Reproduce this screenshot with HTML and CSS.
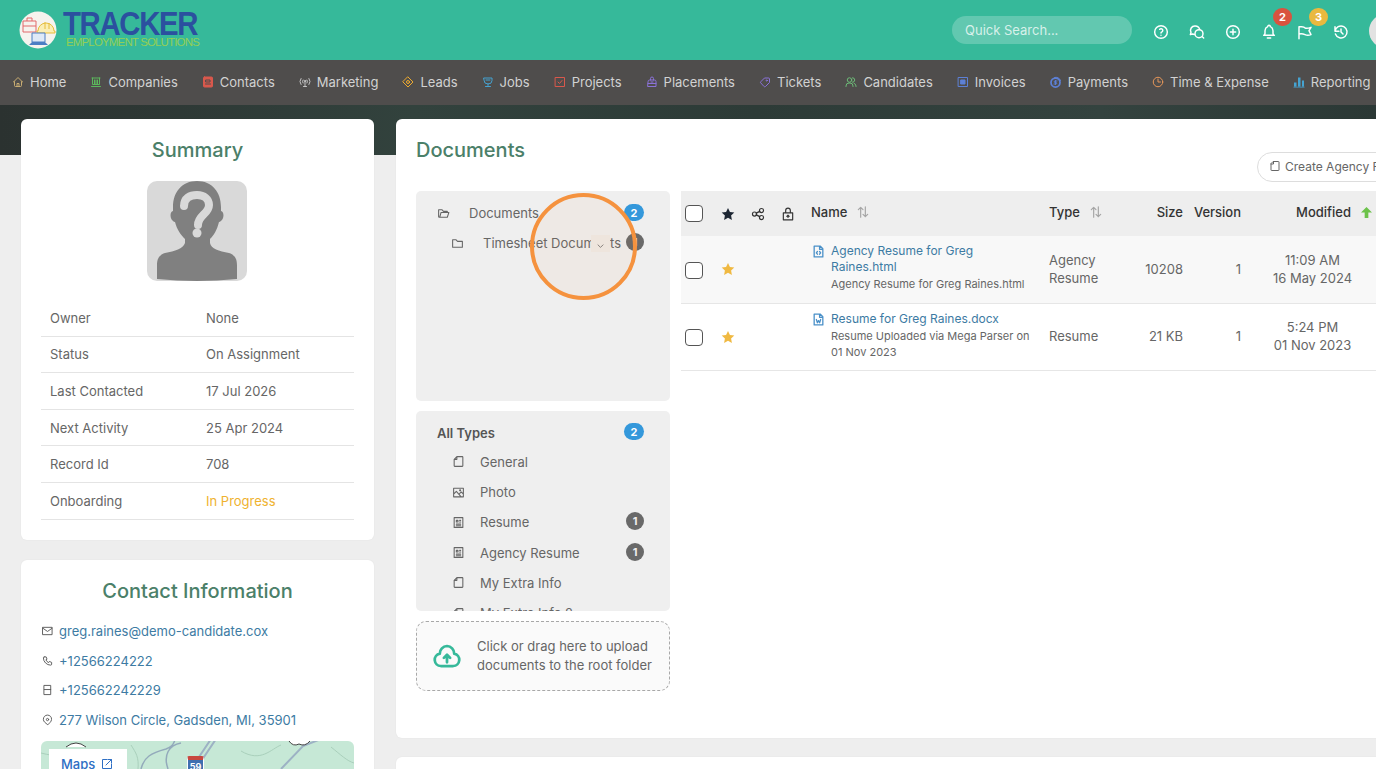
FILE: index.html
```html
<!DOCTYPE html>
<html lang="en">

<head>
    <meta charset="UTF-8">
    <meta name="viewport" content="width=device-width, initial-scale=1.0">
    <title>Candidate Documents</title>
    <link rel="stylesheet" href="styles.css">
</head>

<body>
    <svg class="sprite" aria-hidden="true">
        <symbol id="i-home" viewBox="0 0 24 24"><path d="M5 12H3l9-9 9 9h-2M5 12v7a2 2 0 0 0 2 2h10a2 2 0 0 0 2-2v-7M10 21v-6h4v6"/></symbol>
        <symbol id="i-bank" viewBox="0 0 24 24"><path d="M3 21h18M4 4h16M5 4v13h14V4M9 8v9M12 8v9M15 8v9"/></symbol>
        <symbol id="i-contact" viewBox="0 0 24 24"><path fill="currentColor" d="M5 2h14a2 2 0 0 1 2 2v16a2 2 0 0 1-2 2H5a2 2 0 0 1-2-2V4a2 2 0 0 1 2-2z"/><path stroke="#4f4d4c" d="M8 8h8v4H8zM7 16h10"/></symbol>
        <symbol id="i-antenna" viewBox="0 0 24 24"><path d="M12 11v10M9 21h6M8 8a5 5 0 0 0 0 6M16 8a5 5 0 0 1 0 6M4 5a10 10 0 0 0 0 12M20 5a10 10 0 0 1 0 12"/><circle cx="12" cy="10" r="1.5"/></symbol>
        <symbol id="i-target" viewBox="0 0 24 24"><path d="M12 2l10 10-10 10L2 12z"/><circle cx="12" cy="12" r="3"/></symbol>
        <symbol id="i-trophy" viewBox="0 0 24 24"><path d="M4 4h16v5a8 7 0 0 1-16 0zM12 16v3M7 21h10M8 8h8"/></symbol>
        <symbol id="i-check" viewBox="0 0 24 24"><path d="M3 3h18v18H3zM8 12l3 3 5-6"/></symbol>
        <symbol id="i-bag" viewBox="0 0 24 24"><path d="M4 11a3 3 0 0 1 3-3h10a3 3 0 0 1 3 3v10H4zM9 8V5a3 3 0 0 1 6 0v3M4 15h16M10 12h4"/></symbol>
        <symbol id="i-tag" viewBox="0 0 24 24"><path d="M3 12l8-8h8a2 2 0 0 1 2 2v7l-8 8a2 2 0 0 1-3 0z"/><circle cx="15.500" cy="9" r="1.200"/></symbol>
        <symbol id="i-users" viewBox="0 0 24 24"><circle cx="9" cy="8" r="4.500"/><path d="M2 21v-1a6 6 0 0 1 6-6h2a6 6 0 0 1 6 6v1M15 3.500a4.500 4.500 0 0 1 0 9M22 21v-1a6 6 0 0 0-4-5.500"/></symbol>
        <symbol id="i-invoice" viewBox="0 0 24 24"><path d="M3 3h18v18H3z"/><path fill="currentColor" d="M8 8h8v8H8z"/></symbol>
        <symbol id="i-coins" viewBox="0 0 24 24"><circle cx="11" cy="13" r="9" stroke-width="3.500"/><path d="M9 3a9 9 0 0 1 12 6M11 9v8M14 10h-4a1.500 1.500 0 0 0 0 3h2a1.500 1.500 0 0 1 0 3H8"/></symbol>
        <symbol id="i-clock" viewBox="0 0 24 24"><circle cx="12" cy="12" r="9.500"/><path d="M12 6v6h5"/></symbol>
        <symbol id="i-chart" viewBox="0 0 24 24"><path fill="currentColor" stroke="none" d="M2 13h5v8H2zM10 3h5v18h-5zM18 9h4v12h-4zM1 21.500h22V23H1z"/></symbol>
        <symbol id="i-help" viewBox="0 0 24 24"><circle cx="12" cy="12" r="9.500"/><path d="M12 17v.01M12 13.500a1.500 1.500 0 0 1 1-1.500 2.600 2.600 0 1 0-3-4"/></symbol>
        <symbol id="i-chat" viewBox="0 0 24 24"><path d="M9 3a7 7 0 0 1 7 5M9 3a6.500 6.500 0 0 0-6 9.500L2 16l3.500-1a7 7 0 0 0 2.500.700"/><circle cx="15" cy="14.500" r="6"/><path d="M20 19l2 2"/></symbol>
        <symbol id="i-plus" viewBox="0 0 24 24"><circle cx="12" cy="12" r="9.500"/><path d="M8 12h8M12 8v8"/></symbol>
        <symbol id="i-bell" viewBox="0 0 24 24"><path d="M10 4a2 2 0 1 1 4 0 7 7 0 0 1 4 6v3a4 4 0 0 0 2 4H4a4 4 0 0 0 2-4v-3a7 7 0 0 1 4-6M9.500 21h5"/></symbol>
        <symbol id="i-flag" viewBox="0 0 24 24"><path d="M3 22V4h4q4 0 5 2 3 1 9-1l-3 5 3 6q-5 2-9 0-4-2-9-1"/></symbol>
        <symbol id="i-history" viewBox="0 0 24 24"><path d="M12 7.500V12l3 3M3.100 11a9 9 0 1 1 .5 4M3 4v7h6"/></symbol>
        <symbol id="i-open" viewBox="0 0 24 24"><path d="M5 19l2.500-9H22l-3 9H4a1 1 0 0 1-1-1V5h6l3 3h7v2"/></symbol>
        <symbol id="i-folder" viewBox="0 0 24 24"><path d="M3 5h6l3 3h9v11H3z"/></symbol>
        <symbol id="i-note" viewBox="0 0 24 24"><path d="M9 3h10a1 1 0 0 1 1 1v16a1 1 0 0 1-1 1H5a1 1 0 0 1-1-1V8zM9 3v5H4"/></symbol>
        <symbol id="i-photo" viewBox="0 0 24 24"><path d="M3 4h18v16H3zM3 15l5-5 9 10M14 14l3-3 4 4"/><circle cx="15" cy="8" r="1"/></symbol>
        <symbol id="i-doc" viewBox="0 0 24 24"><path d="M4 3h16v18H4zM8 8h3v3H8zM14 8h2M14 11h2M8 15h8M8 18h8"/></symbol>
        <symbol id="i-cloud" viewBox="0 0 24 24"><path d="M7 20a5 5 0 0 1-.8-9.900A6.200 6.200 0 0 1 12 4a6.200 6.200 0 0 1 5.800 6.100A5 5 0 0 1 17 20z"/><path d="M12 17v-6M9.500 13.500L12 11l2.500 2.500"/></symbol>
        <symbol id="i-star" viewBox="0 0 24 24"><path fill="currentColor" stroke="none" d="M12 1.500l3.300 6.900 7.500 1-5.500 5.200 1.400 7.500L12 18.500l-6.700 3.600 1.400-7.500L1.200 9.400l7.500-1z"/></symbol>
        <symbol id="i-share" viewBox="0 0 24 24"><circle cx="6" cy="12" r="3.500"/><circle cx="18" cy="6" r="3.500"/><circle cx="18" cy="18" r="3.500"/><path d="M9 10.500l6-3M9 13.500l6 3"/></symbol>
        <symbol id="i-lock" viewBox="0 0 24 24"><path d="M4 10h16v12H4zM8 10V6a4 4 0 0 1 8 0v4M12 18v-4M10 16l2-2 2 2"/></symbol>
        <symbol id="i-sort" viewBox="0 0 24 24"><path d="M8 21V4M4 8l4-4 4 4M16 3v17M12 16l4 4 4-4"/></symbol>
        <symbol id="i-code" viewBox="0 0 24 24"><path d="M4 2h11l5 5v15H4zM14 2v6h6M10 12l-2 2.500 2 2.500M14 12l2 2.500-2 2.500"/></symbol>
        <symbol id="i-word" viewBox="0 0 24 24"><path d="M4 2h11l5 5v15H4zM14 2v6h6M8 12l2 6 2-4 2 4 2-6"/></symbol>
        <symbol id="i-mail" viewBox="0 0 24 24"><path d="M2 4h20v16H2zM2 6l10 7 10-7"/></symbol>
        <symbol id="i-phone" viewBox="0 0 24 24"><path d="M5 3h4l2 5-2.500 1.500a11 11 0 0 0 6 6L16 13l5 2v4a2 2 0 0 1-2 2A16 16 0 0 1 3 5a2 2 0 0 1 2-2"/></symbol>
        <symbol id="i-fax" viewBox="0 0 24 24"><path d="M5 2h14v20H5zM5 11h14"/></symbol>
        <symbol id="i-pin" viewBox="0 0 24 24"><circle cx="12" cy="11" r="2.500"/><path d="M12 22l-6-5a9 9 0 1 1 12 0z"/></symbol>
        <symbol id="i-external" viewBox="0 0 24 24"><path d="M12 3H3v18h18v-9M10 14L21 3M14 3h7v7"/></symbol>
    </svg>

    <header class="topbar">
        <div class="logo">
            <svg class="logo-mark" viewBox="0 0 38 38">
                <circle cx="19" cy="19" r="18.500" fill="#f6f3ee"/>
                <path d="M4 10h13v11H4zM8 10V7h5v3M4 15h13" fill="none" stroke="#e2686a" stroke-width="1"/>
                <path d="M19 20a8 8 0 0 1 16 0h1v2H18v-2zM26 11v7M30 12v6" fill="#fbeeb5" stroke="#e6bd3c" stroke-width="1"/>
                <path d="M13 22h13v9H13z" fill="#dfe9f7" stroke="#4c7ec4" stroke-width="1"/>
                <path d="M10 34h19l-3-3H13z" fill="#4c7ec4"/>
            </svg>
            <div class="logo-text">
                <div class="logo-name">TRACKER</div>
                <div class="logo-sub">EMPLOYMENT SOLUTIONS</div>
            </div>
        </div>
        <input class="quick-search" type="text" placeholder="Quick Search...">
        <div class="top-icons">
            <svg class="ic"><use href="#i-help"/></svg>
            <svg class="ic"><use href="#i-chat"/></svg>
            <svg class="ic"><use href="#i-plus"/></svg>
            <span class="top-item"><svg class="ic"><use href="#i-bell"/></svg><b class="top-badge red">2</b></span>
            <span class="top-item"><svg class="ic"><use href="#i-flag"/></svg><b class="top-badge yellow">3</b></span>
            <svg class="ic"><use href="#i-history"/></svg>
        </div>
        <div class="top-avatar"></div>
    </header>

    <nav class="mainnav">
        <a class="nav-item"><svg class="ic c-tan"><use href="#i-home"/></svg>Home</a>
        <a class="nav-item"><svg class="ic c-green"><use href="#i-bank"/></svg>Companies</a>
        <a class="nav-item"><svg class="ic c-red"><use href="#i-contact"/></svg>Contacts</a>
        <a class="nav-item"><svg class="ic c-grey"><use href="#i-antenna"/></svg>Marketing</a>
        <a class="nav-item"><svg class="ic c-amber"><use href="#i-target"/></svg>Leads</a>
        <a class="nav-item"><svg class="ic c-sky"><use href="#i-trophy"/></svg>Jobs</a>
        <a class="nav-item"><svg class="ic c-red"><use href="#i-check"/></svg>Projects</a>
        <a class="nav-item"><svg class="ic c-purple"><use href="#i-bag"/></svg>Placements</a>
        <a class="nav-item"><svg class="ic c-purple"><use href="#i-tag"/></svg>Tickets</a>
        <a class="nav-item"><svg class="ic c-mint"><use href="#i-users"/></svg>Candidates</a>
        <a class="nav-item"><svg class="ic c-blue"><use href="#i-invoice"/></svg>Invoices</a>
        <a class="nav-item"><svg class="ic c-blue"><use href="#i-coins"/></svg>Payments</a>
        <a class="nav-item"><svg class="ic c-orange"><use href="#i-clock"/></svg>Time &amp; Expense</a>
        <a class="nav-item"><svg class="ic c-sky"><use href="#i-chart"/></svg>Reporting</a>
    </nav>

    <main class="content">
        <div class="left-col">
            <section class="card summary">
                <h2 class="card-title center">Summary</h2>
                <svg class="avatar" viewBox="0 0 100 100">
                    <path fill="#808080" d="M50 0C35 0 26 11 26 26v4c-4 1-3 10 2 11 2 8 6 13 10 17v4c-2 6-10 8-20 10-6 2-8 6-8 12v14q40 4 80 0V84c0-6-2-10-8-12-10-2-18-4-19-10v-4c4-4 7-9 9-17 5-1 6-10 2-11v-4C74 11 65 0 50 0z"/>
                    <path fill="none" stroke="#d9d9d9" stroke-width="8" stroke-linecap="round" stroke-linejoin="round" d="M37 25c0-8 6-11 13-11s12 4 12 10c0 9-11 10-11 20"/>
                    <circle cx="50" cy="52" r="4.500" fill="#d9d9d9"/>
                </svg>
                <dl class="facts">
                    <div class="fact"><dt>Owner</dt><dd>None</dd></div>
                    <div class="fact"><dt>Status</dt><dd>On Assignment</dd></div>
                    <div class="fact"><dt>Last Contacted</dt><dd>17 Jul 2026</dd></div>
                    <div class="fact"><dt>Next Activity</dt><dd>25 Apr 2024</dd></div>
                    <div class="fact"><dt>Record Id</dt><dd>708</dd></div>
                    <div class="fact"><dt>Onboarding</dt><dd class="progress">In Progress</dd></div>
                </dl>
            </section>

            <section class="card contact">
                <h2 class="card-title center">Contact Information</h2>
                <ul class="contact-list">
                    <li><svg class="ic"><use href="#i-mail"/></svg><a>greg.raines@demo-candidate.cox</a></li>
                    <li><svg class="ic"><use href="#i-phone"/></svg><a>+12566224222</a></li>
                    <li><svg class="ic"><use href="#i-fax"/></svg><a>+125662242229</a></li>
                    <li><svg class="ic"><use href="#i-pin"/></svg><a>277 Wilson Circle, Gadsden, MI, 35901</a></li>
                </ul>
                <div class="map">
                    <svg class="map-roads" viewBox="0 0 313 120">
                        <path d="M100 28C103 16 110 12 125 8 135 4 132 0 135 -2M127 28C122 14 128 4 140 2" fill="none" stroke="#93aabb" stroke-width="1.500"/>
                        <path d="M150 28L170 -2M155 28L175 -2M240 28L262 5 280 -2" fill="none" stroke="#9db2c4" stroke-width="2"/>
                        <path d="M0 12C30 20 40 8 60 14M90 4C95 12 98 16 97 28M200 10C220 22 230 8 240 4M290 6C300 14 306 20 313 22" fill="none" stroke="#a9cfbb" stroke-width="1"/>
                        <path d="M248 0q4 6 10 3q6 3 11 -3" fill="#fff" stroke="#444" stroke-width="1"/>
                        <path d="M25 6q10 -8 20 0" fill="#fff" stroke="#444" stroke-width="1"/>
                    </svg>
                    <span class="shield">59</span>
                    <a class="maps-link">Maps <svg class="ic"><use href="#i-external"/></svg></a>
                </div>
            </section>
        </div>

        <div class="right-col">
            <section class="card documents">
                <div class="doc-head">
                    <h2 class="card-title">Documents</h2>
                    <button class="create-btn"><svg class="ic"><use href="#i-note"/></svg>Create Agency Resume</button>
                </div>
                <div class="doc-body">
                    <div class="doc-side">
                        <div class="panel folders">
                            <div class="side-row top"><svg class="ic"><use href="#i-open"/></svg><span class="row-label wide">Documents</span><b class="count blue">2</b></div>
                            <div class="side-row sub"><svg class="ic"><use href="#i-folder"/></svg><span class="row-label wide">Timesheet Documents</span><b class="count">1</b><svg class="row-chevron" viewBox="0 0 10 6"><path d="M1 1l4 4 4-4"/></svg></div>
                        </div>
                        <div class="panel types">
                            <div class="side-row top strong"><span class="row-label">All Types</span><b class="count blue">2</b></div>
                            <div class="side-row type"><svg class="ic"><use href="#i-note"/></svg><span class="row-label">General</span></div>
                            <div class="side-row type"><svg class="ic"><use href="#i-photo"/></svg><span class="row-label">Photo</span></div>
                            <div class="side-row type"><svg class="ic"><use href="#i-doc"/></svg><span class="row-label">Resume</span><b class="count">1</b></div>
                            <div class="side-row type"><svg class="ic"><use href="#i-doc"/></svg><span class="row-label">Agency Resume</span><b class="count">1</b></div>
                            <div class="side-row type"><svg class="ic"><use href="#i-note"/></svg><span class="row-label">My Extra Info</span></div>
                            <div class="side-row type"><svg class="ic"><use href="#i-note"/></svg><span class="row-label">My Extra Info 2</span></div>
                        </div>
                        <div class="upload">
                            <svg class="ic upload-icon"><use href="#i-cloud"/></svg>
                            <span>Click or drag here to upload documents to the root folder</span>
                        </div>
                    </div>

                    <table class="doc-table">
                        <colgroup>
                            <col class="w-check">
                            <col class="w-icon">
                            <col class="w-icon">
                            <col class="w-icon">
                            <col class="w-name">
                            <col class="w-type">
                            <col class="w-size">
                            <col class="w-version">
                            <col class="w-modified">
                            <col>
                        </colgroup>
                        <thead>
                            <tr>
                                <th class="pad-check"><input type="checkbox"></th>
                                <th class="t-icon"><svg class="ic c-ink"><use href="#i-star"/></svg></th>
                                <th class="t-icon"><svg class="ic"><use href="#i-share"/></svg></th>
                                <th class="t-icon"><svg class="ic"><use href="#i-lock"/></svg></th>
                                <th>Name<svg class="ic sort"><use href="#i-sort"/></svg></th>
                                <th>Type<svg class="ic sort"><use href="#i-sort"/></svg></th>
                                <th class="right">Size</th>
                                <th class="right">Version</th>
                                <th class="right modified-head">Modified<svg class="ic sort-on" viewBox="0 0 12 12"><path d="M6 0L12 6H8v6H4V6H0z"/></svg></th>
                                <th></th>
                            </tr>
                        </thead>
                        <tbody>
                            <tr class="row-a">
                                <td class="pad-check"><input type="checkbox"></td>
                                <td class="t-icon"><svg class="ic c-gold"><use href="#i-star"/></svg></td>
                                <td></td>
                                <td></td>
                                <td class="name-cell">
                                    <svg class="ic file-ic"><use href="#i-code"/></svg>
                                    <div>
                                        <a class="file-link">Agency Resume for Greg Raines.html</a>
                                        <div class="file-note">Agency Resume for Greg Raines.html</div>
                                    </div>
                                </td>
                                <td>Agency Resume</td>
                                <td class="right">10208</td>
                                <td class="right">1</td>
                                <td class="center">11:09 AM<br>16 May 2024</td>
                                <td></td>
                            </tr>
                            <tr class="row-b">
                                <td class="pad-check"><input type="checkbox"></td>
                                <td class="t-icon"><svg class="ic c-gold"><use href="#i-star"/></svg></td>
                                <td></td>
                                <td></td>
                                <td class="name-cell">
                                    <svg class="ic file-ic"><use href="#i-word"/></svg>
                                    <div>
                                        <a class="file-link">Resume for Greg Raines.docx</a>
                                        <div class="file-note">Resume Uploaded via Mega Parser on 01 Nov 2023</div>
                                    </div>
                                </td>
                                <td>Resume</td>
                                <td class="right">21 KB</td>
                                <td class="right">1</td>
                                <td class="center">5:24 PM<br>01 Nov 2023</td>
                                <td></td>
                            </tr>
                        </tbody>
                    </table>
                </div>
            </section>
            <section class="card next-card"></section>
        </div>
    </main>

    <div class="click-ring"></div>
</body>

</html>
```

FILE: styles.css
```css
* {
    margin: 0;
    padding: 0;
    box-sizing: border-box;
}

html,
body {
    height: 100%;
    overflow: hidden;
}

body {
    font-family: Inter, "Liberation Sans", sans-serif;
    font-size: 13px;
    color: #666;
    background: #eee;
}

.sprite {
    display: none;
}

.ic {
    display: block;
    flex: none;
    width: 13px;
    height: 13px;
    fill: none;
    stroke: currentColor;
    stroke-width: 2;
    stroke-linecap: round;
    stroke-linejoin: round;
}

.c-tan { color: #c9ad72; }
.c-green { color: #5cb85c; }
.c-red { color: #d9584c; }
.c-grey { color: #c4c4c4; }
.c-amber { color: #efab2f; }
.c-sky { color: #45a3d1; }
.c-purple { color: #8b72d8; }
.c-mint { color: #6dbb78; }
.c-blue { color: #5d80d6; }
.c-orange { color: #e6975a; }
.c-ink { color: #1d2633; }
.c-gold { color: #f0b942; }

/* top bar */
.topbar {
    display: flex;
    align-items: center;
    height: 60px;
    padding-left: 19px;
    background: #36b99a;
    overflow: hidden;
}

.logo {
    display: flex;
    flex: 0 0 933px;
    align-items: center;
}

.logo-mark {
    display: block;
    width: 38px;
    height: 38px;
}

.logo-text {
    align-self: flex-start;
    margin-left: 6px;
    font-family: "Liberation Sans", sans-serif;
    font-weight: 700;
}

.logo-name {
    height: 26px;
    font-size: 33px;
    line-height: 26px;
    letter-spacing: -1.500px;
    color: #2b509f;
    transform: scaleX(.89);
    transform-origin: left center;
}

.logo-sub {
    margin-left: 3px;
    font-size: 11.500px;
    font-weight: 400;
    line-height: 10px;
    letter-spacing: -.85px;
    color: #93cf55;
}

.quick-search {
    flex: none;
    width: 180px;
    height: 28px;
    padding-left: 13px;
    border: 0;
    border-radius: 14px;
    font: 13px Inter, "Liberation Sans", sans-serif;
    color: #fff;
    background: rgba(255, 255, 255, .22);
}

.quick-search::placeholder {
    color: rgba(255, 255, 255, .75);
}

.top-icons {
    display: flex;
    flex: none;
    gap: 20px;
    margin: 4px 0 0 21px;
    color: #fff;
}

.top-icons .ic {
    width: 16px;
    height: 16px;
    stroke-width: 2.200;
}

.top-item {
    position: relative;
}

.top-badge {
    position: absolute;
    top: -16px;
    left: 12px;
    width: 19px;
    height: 18px;
    border-radius: 9px;
    font-size: 11px;
    font-weight: 700;
    line-height: 18px;
    text-align: center;
    color: #fff;
}

.top-badge.red {
    background: #d9533f;
}

.top-badge.yellow {
    background: #e9b93f;
}

.top-avatar {
    flex: none;
    width: 34px;
    height: 34px;
    margin: 2px 0 0 20px;
    border-radius: 50%;
    background: #e2e2e2;
}

/* main nav */
.mainnav {
    display: flex;
    gap: 24px;
    align-items: center;
    height: 45px;
    padding: 0 0 2px 12px;
    white-space: nowrap;
    color: #d2d2d2;
    background: #4f4d4c;
    overflow: hidden;
}

.nav-item {
    display: flex;
    flex: none;
    gap: 6px;
    align-items: center;
}

.nav-item .ic {
    width: 12px;
    height: 12px;
}

/* page */
.content {
    display: flex;
    gap: 22px;
    align-items: flex-start;
    padding: 14px 0 0 21px;
    background: linear-gradient(90deg, #2b3230, #32423d 30%, #2d3b37 55%, #34433f 80%, #2b3835) 0 0 / 100% 50px no-repeat;
}

.left-col {
    display: flex;
    flex: 0 0 353px;
    flex-direction: column;
    gap: 20px;
}

.right-col {
    display: flex;
    flex: 0 0 1049px;
    flex-direction: column;
    gap: 19px;
}

.card {
    padding: 19px 20px 20px;
    border-radius: 6px;
    background: #fff;
    box-shadow: 0 0 2px rgba(0, 0, 0, .06);
}

.card-title {
    font-size: 20px;
    font-weight: 500;
    line-height: 24px;
    color: #4b8069;
}

.center {
    text-align: center;
}

/* summary */
.avatar {
    display: block;
    width: 100px;
    height: 100px;
    margin: 19px 0 19px 106px;
    border-radius: 10px;
    background: #d9d9d9;
}

.fact {
    display: flex;
    align-items: center;
    height: 36.600px;
    padding-left: 9px;
    border-bottom: 1px solid #e4e4e4;
}

.fact dt {
    flex: 0 0 156px;
}

.progress {
    color: #efb22f;
}

/* contact */
.contact {
    height: 400px;
}

.contact-list {
    margin-top: 13.600px;
    list-style: none;
}

.contact-list li {
    display: flex;
    gap: 6px;
    align-items: center;
    height: 29.600px;
    padding-left: 1px;
}

.contact-list .ic {
    width: 11px;
    height: 12px;
    color: #555;
}

.contact-list a {
    color: #3d7ba3;
}

.map {
    position: relative;
    height: 120px;
    margin-top: 6.400px;
    border-radius: 6px;
    background: #c6e8d6;
    overflow: hidden;
}

.map-roads {
    display: block;
    width: 313px;
    height: 120px;
}

.shield {
    position: absolute;
    top: 15px;
    left: 146px;
    width: 17px;
    height: 18px;
    border: 1px solid #fff;
    border-top: 4px solid #c8473f;
    border-radius: 2px 2px 6px 6px;
    font-size: 9px;
    font-weight: 700;
    line-height: 13px;
    text-align: center;
    color: #fff;
    background: #3f6fb0;
}

.maps-link {
    position: absolute;
    top: 8px;
    left: 8px;
    display: flex;
    gap: 6px;
    align-items: flex-start;
    width: 78px;
    height: 36px;
    padding: 7px 0 0 12px;
    font-weight: 500;
    line-height: 16px;
    color: #2e6fc4;
    background: #fff;
}

.maps-link .ic {
    width: 12px;
    height: 12px;
    margin-top: 2px;
}

/* documents */
.documents {
    padding-bottom: 47px;
}

.doc-head {
    display: flex;
    justify-content: space-between;
    height: 53px;
}

.create-btn {
    display: flex;
    gap: 4px;
    align-items: center;
    width: 168px;
    height: 30px;
    margin-top: 14px;
    padding: 0 14px 2px 11px;
    border: 1px solid #ddd;
    border-radius: 15px;
    font: 12px Inter, "Liberation Sans", sans-serif;
    white-space: nowrap;
    color: #666;
    background: #fff;
}

.create-btn .ic {
    width: 12px;
    height: 12px;
}

.doc-body {
    display: flex;
    gap: 11px;
    align-items: flex-start;
}

.doc-side {
    display: flex;
    flex: 0 0 254px;
    flex-direction: column;
    gap: 10px;
}

.panel {
    padding-top: 7px;
    border-radius: 5px;
    background: #efefef;
    overflow: hidden;
}

.folders {
    height: 210px;
}

.types {
    height: 200px;
}

.side-row {
    display: flex;
    align-items: center;
    height: 30px;
    padding: 0 26px 0 21px;
}

.side-row .ic {
    width: 13px;
    height: 13px;
}

.row-label {
    flex: 1;
    margin-left: 15px;
    white-space: nowrap;
}

.row-label.wide {
    margin-left: 19px;
}

.side-row.sub {
    position: relative;
    padding-left: 35px;
}

.side-row.strong {
    height: 28.800px;
    padding-left: 21px;
}

.side-row.strong .row-label {
    margin: 2px 0 0;
    font-weight: 600;
    color: #555;
}

.side-row.type {
    height: 30.250px;
    padding-left: 36px;
}

.row-chevron {
    position: absolute;
    top: 7px;
    left: 175px;
    width: 19px;
    height: 17px;
    padding: 8px 6px 3px;
    fill: none;
    stroke: #777;
    stroke-width: 1.300;
    background: #efeae6;
}

.count {
    flex: none;
    width: 18px;
    height: 18px;
    margin-top: -2px;
    border-radius: 9px;
    font-size: 11px;
    font-weight: 700;
    line-height: 18px;
    text-align: center;
    color: #eee;
    background: #696969;
}

.count.blue {
    width: 20px;
    height: 17px;
    color: #fff;
    background: #3498db;
}

.upload {
    display: flex;
    gap: 15px;
    align-items: center;
    height: 70px;
    padding-left: 15px;
    border: 1px dashed #a8a8a8;
    border-radius: 10px;
    line-height: 19px;
    background: #fafafa;
}

.upload-icon {
    width: 30px;
    height: 30px;
    color: #36b99a;
    stroke-width: 2.200;
}

.doc-table {
    flex: none;
    width: 744px;
    table-layout: fixed;
    border-collapse: collapse;
}

.w-check { width: 32px; }
.w-icon { width: 30px; }
.w-name { width: 238px; }
.w-type { width: 69px; }
.w-size { width: 81px; }
.w-version { width: 58px; }
.w-modified { width: 127px; }

.doc-table th {
    height: 45px;
    padding: 0 8px 3px;
    font-size: 13px;
    font-weight: 500;
    text-align: left;
    white-space: nowrap;
    color: #333;
    background: #eee;
}

.doc-table th.right {
    padding-left: 0;
}

.doc-table th .ic {
    display: inline-block;
    vertical-align: -2px;
}

.doc-table td {
    padding: 0 8px 1px;
    line-height: 18px;
    border-bottom: 1px solid #e6e6e6;
}

.doc-table .right {
    text-align: right;
}

.doc-table .center {
    text-align: center;
}

.doc-table th.pad-check,
.doc-table td.pad-check {
    padding: 0 0 0 4px;
    line-height: 0;
}

.doc-table td.pad-check {
    padding-top: 2px;
}

.doc-table th.t-icon,
.doc-table td.t-icon {
    padding: 0 0 0 8px;
    color: #333;
}

.doc-table th.t-icon .ic,
.doc-table td.t-icon .ic {
    display: block;
    width: 14px;
    height: 14px;
}

.doc-table th.t-icon .c-ink {
    color: #1d2633;
}

.doc-table td.t-icon .c-gold {
    color: #f0b942;
}

.doc-table input {
    appearance: none;
    width: 18px;
    height: 17px;
    border: 1px solid #555;
    border-radius: 4px;
    background: #fff;
    vertical-align: middle;
}

.doc-table th .sort {
    width: 14px;
    height: 14px;
    margin-left: 9px;
    color: #a5a5a5;
}

.doc-table th .sort-on {
    width: 11px;
    height: 11px;
    margin-left: 10px;
    vertical-align: -1px;
    fill: #6cc24a;
    stroke: none;
}

.doc-table .modified-head {
    padding-right: 4px;
}

.row-a td {
    height: 67px;
    background: #f8f8f8;
}

.row-b td {
    height: 67px;
}

.doc-table .name-cell {
    position: relative;
    padding-bottom: 3px;
    line-height: 16px;
}

.name-cell > div {
    padding-left: 20px;
}

.file-ic {
    position: absolute;
    top: 9px;
    left: 9px;
    width: 13px;
    height: 13px;
    stroke-width: 2.400;
    color: #4a90c8;
}

.file-link {
    display: block;
    font-size: 12px;
    color: #3d7ba3;
}

.file-note {
    margin-top: 1px;
    font-size: 11px;
    color: #666;
}

.next-card {
    height: 200px;
}

/* click highlight from the screen recording */
.click-ring {
    position: absolute;
    top: 193px;
    left: 530px;
    width: 107px;
    height: 107px;
    border: 4px solid #f5923e;
    border-radius: 50%;
    background: rgba(245, 146, 62, .05);
    pointer-events: none;
}
```
